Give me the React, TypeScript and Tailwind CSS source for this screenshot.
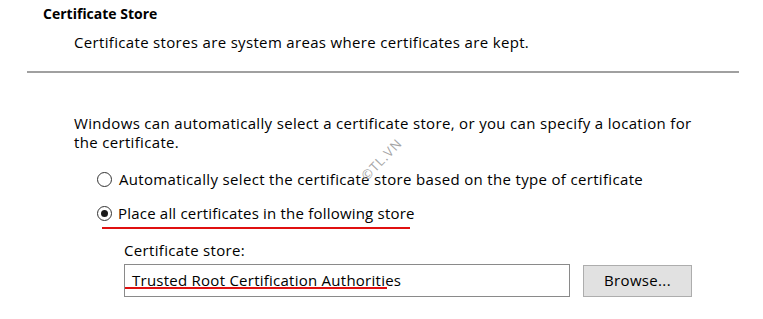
import React from "react";

function Radio({ checked }: { checked?: boolean }) {
  return (
    <span className="relative inline-flex h-[15px] w-[15px] shrink-0 items-center justify-center rounded-full border border-[#333333] bg-white">
      {checked && <span className="h-[7px] w-[7px] rounded-full bg-[#1a1a1a]" />}
    </span>
  );
}

export default function App() {
  return (
    <div
      className="relative h-[319px] w-[763px] overflow-hidden bg-white text-[15px] tracking-[0.33px] text-black"
      style={{ fontFamily: "'Open Sans', 'Noto Sans', sans-serif" }}
    >
      {/* header */}
      <div className="pt-[4px] pl-[43px] text-[14px] font-bold leading-[20px] tracking-normal">Certificate Store</div>
      <div className="mt-[8px] pl-[74px] leading-[20px]">
        Certificate stores are system areas where certificates are kept.
      </div>
      <div className="mt-[19px] ml-[27px] mr-[24px] h-[2px] bg-[#a0a0a0]" />

      {/* body */}
      <div className="mt-[41px] pl-[74px] pr-[60px] leading-[19px]">
        Windows can automatically select a certificate store, or you can specify a location for
        the certificate.
      </div>

      <div className="mt-[17px] flex flex-col gap-[14px] pl-[97px]">
        <label className="flex items-center gap-[7px] leading-[20px]">
          <Radio />
          <span>Automatically select the certificate store based on the type of certificate</span>
        </label>
        <label className="flex items-center gap-[6px] leading-[20px]">
          <Radio checked />
          <span className="relative tracking-[0.2px]">
            Place all certificates in the following store
            <span className="absolute -left-[16px] bottom-[-6px] h-[2px] w-[308px] bg-[#e01010]" />
          </span>
        </label>
      </div>

      <div className="mt-[17px] pl-[124px] leading-[20px]">Certificate store:</div>
      <div className="mt-[4px] flex items-center gap-[13px] pl-[124px]">
        <div className="relative flex h-[33px] w-[446px] items-center border border-[#8a8a8a] pl-[7px] tracking-[0.25px]">
          Trusted Root Certification Authorities
          <span className="absolute left-0 top-[22px] h-[2px] w-[262px] bg-[#e01010]" />
        </div>
        <button className="h-[32px] w-[109px] border border-[#adadad] bg-[#e1e1e1]">
          Browse...
        </button>
      </div>

      {/* watermark */}
      <div className="absolute left-[356px] top-[150px] -rotate-[46deg] text-[13px] tracking-[1px] text-[#a5a5a5]">
        ©TL.VN
      </div>
    </div>
  );
}
